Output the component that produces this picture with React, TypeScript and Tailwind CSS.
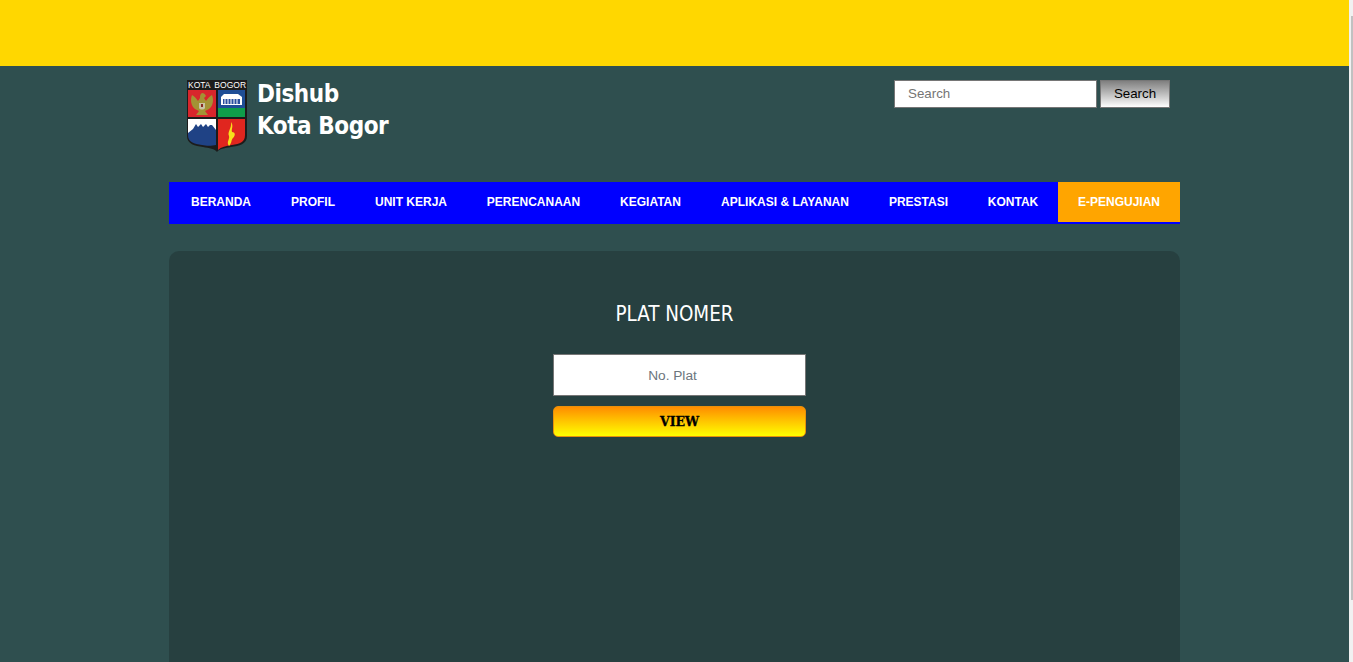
const navItems = [
  { label: "BERANDA", width: "w-[100px]" },
  { label: "PROFIL", width: "w-[84px]" },
  { label: "UNIT KERJA", width: "w-[112px]" },
  { label: "PERENCANAAN", width: "w-[133px]" },
  { label: "KEGIATAN", width: "w-[101px]" },
  { label: "APLIKASI & LAYANAN", width: "w-[168px]" },
  { label: "PRESTASI", width: "w-[99px]" },
  { label: "KONTAK", width: "w-[90px]" },
];

function Logo() {
  return (
    <svg width="62" height="72" viewBox="0 0 62 72" className="block">
      <path d="M1 0H61V56C61 64 53 66 45 67C39 68 33 69 31 72C29 69 23 68 17 67C9 66 1 64 1 56Z" fill="#1c1c1c" />
      <text x="31" y="8" textAnchor="middle" fill="#fff" fontSize="8.5" wordSpacing="2" fontFamily="'Liberation Sans', sans-serif">KOTA BOGOR</text>
      <rect x="2" y="10" width="28" height="27" fill="#d8262c" />
      <rect x="32" y="10" width="27" height="18" fill="#1f4e96" />
      <rect x="32" y="28" width="27" height="9" fill="#0f9d4a" />
      <path d="M35 17L38 14H52L56 17V25H35Z" fill="#fff" />
      <path d="M37 19H54V24H37Z" fill="#2a4f9f" />
      <path d="M39 19V24M42 19V24M45 19V24M48 19V24M51 19V24" stroke="#fff" strokeWidth="1" />
      <path d="M16 13C14 14 14 16 14 18L12 21C10 18 8 16 6 15C4 20 5 26 9 29L13 31L10 35H22L19 31L23 29C27 26 28 20 26 15C24 16 22 18 20 21L18 18L20 16C19 14 18 13 16 13Z" fill="#a39334" />
      <path d="M13 23H19V28C18 30 14 30 13 28Z" fill="#c9c2a4" />
      <path d="M15 24H17V27H15Z" fill="#8a2a20" />
      <path d="M2 39H30V65C26 66 20 66 16 65C8 64 2 62 2 55Z" fill="#1f4285" />
      <path d="M2 39H30V50L26 45H24L22 47L20 44L17 47L15 44L12 47L10 44L7 49L2 53Z" fill="#fff" />
      <path d="M32 39H59V55C59 62 54 64 46 65C40 66 35 67 32 70Z" fill="#e0261f" />
      <path d="M45 42C48 46 45 49 46 52C49 52 50 55 47 58C45 60 46 63 43 66C40 62 44 59 43 56C41 52 46 48 45 42Z" fill="#f7e01b" />
    </svg>
  );
}

export default function App() {
  return (
    <div className="flex h-[662px] overflow-hidden bg-white">
      <div className="flex-1 min-w-0 bg-[#2f4f4f] font-['Liberation_Sans',sans-serif]">
        <div className="h-[66px] bg-[#ffd700]" />

        <div className="mx-auto w-[1011px]">
          <header className="flex h-[116px] justify-between">
            <div className="flex items-start pl-[17px] pt-[14px]">
              <Logo />
              <div className="ml-[9px] mt-[-2px] text-[24px] leading-[32px] tracking-[-0.45px] font-bold text-white font-['DejaVu_Sans_Condensed','DejaVu_Sans',sans-serif]">
                <div>Dishub</div>
                <div>Kota Bogor</div>
              </div>
            </div>
            <form className="flex items-start gap-[3px] pr-[10px] pt-[14px]">
              <input
                placeholder="Search"
                className="h-[28px] w-[203px] border border-[#767676] bg-white pb-[2px] pl-[13px] text-[13.33px] text-black placeholder:text-[#757575]"
              />
              <button
                type="button"
                className="h-[28px] w-[70px] border border-[#767676] bg-gradient-to-b from-[#808080] to-white text-[13.33px] text-black"
              >
                Search
              </button>
            </form>
          </header>

          <nav className="flex h-[42px] items-start bg-[#0000ff]">
            {navItems.map((item) => (
              <a
                key={item.label}
                className={`flex h-[40px] items-center justify-center pl-[4px] text-xs font-bold text-white ${item.width}`}
              >
                {item.label}
              </a>
            ))}
            <a className="ml-auto flex h-[40px] w-[122px] items-center justify-center bg-[#ffa500] text-xs font-bold text-white">
              E-PENGUJIAN
            </a>
          </nav>

          <main className="mt-[27px] h-[500px] rounded-t-[10px] bg-[#274040]">
            <h1 className="pt-[50px] text-center text-[20.4px] leading-[26px] text-white font-['DejaVu_Sans_Condensed','DejaVu_Sans',sans-serif]">
              PLAT NOMER
            </h1>
            <form className="mx-auto mt-[27px] flex w-[253px] translate-x-[5px] flex-col gap-[10px]">
              <input
                placeholder="No. Plat"
                className="h-[42px] w-full border border-[#767676] bg-white pr-[14px] text-center text-[13.7px] text-black placeholder:text-[#6c757d]"
              />
              <button
                type="button"
                className="h-[31px] w-full rounded-[5px] border border-[#e8900a] bg-gradient-to-b from-[#ff8c00] to-[#ffff00] pt-[2px] text-[12.5px] font-bold text-black [-webkit-text-stroke:0.3px_black] font-['DejaVu_Serif',serif]"
              >
                VIEW
              </button>
            </form>
          </main>
        </div>
      </div>
      <div className="w-[4px] bg-[#f1f1f1] pl-[2px] pt-[16px]">
        <div className="h-[584px] bg-[#c1c1c1]" />
      </div>
    </div>
  );
}
